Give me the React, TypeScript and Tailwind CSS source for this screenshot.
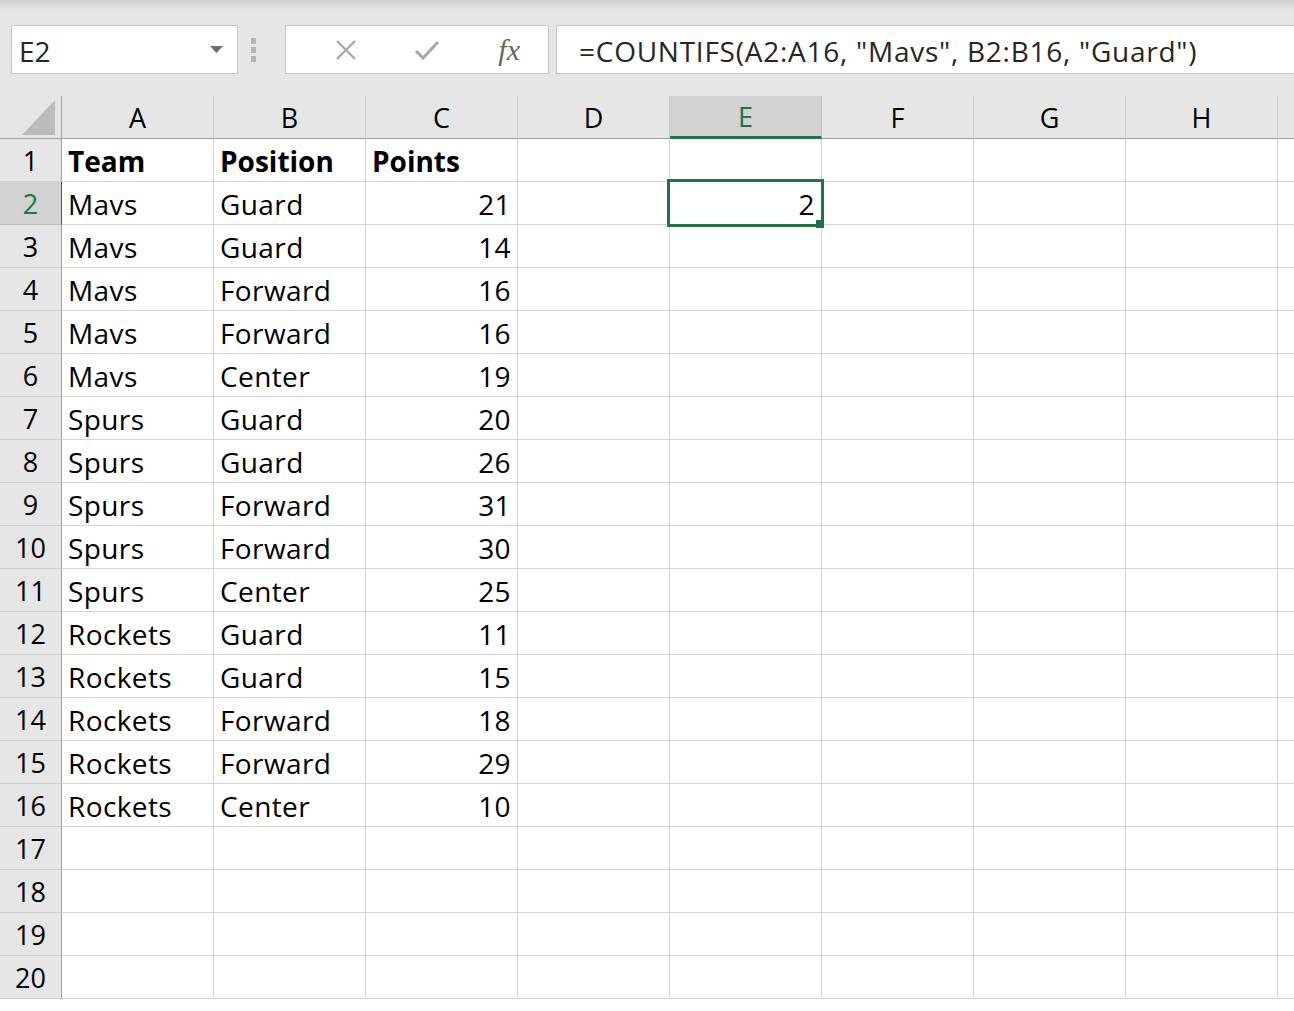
import React from "react";

type Cell = string | number | null;

const COLS = ["A", "B", "C", "D", "E", "F", "G", "H"];

const DATA: [string, string, number][] = [
  ["Mavs", "Guard", 21],
  ["Mavs", "Guard", 14],
  ["Mavs", "Forward", 16],
  ["Mavs", "Forward", 16],
  ["Mavs", "Center", 19],
  ["Spurs", "Guard", 20],
  ["Spurs", "Guard", 26],
  ["Spurs", "Forward", 31],
  ["Spurs", "Forward", 30],
  ["Spurs", "Center", 25],
  ["Rockets", "Guard", 11],
  ["Rockets", "Guard", 15],
  ["Rockets", "Forward", 18],
  ["Rockets", "Forward", 29],
  ["Rockets", "Center", 10],
];

// build the 20 visible rows, E2 holds the formula result
const rows: Cell[][] = Array.from({ length: 20 }, (_, i) => {
  const r: Cell[] = Array(8).fill(null);
  if (i === 0) {
    r[0] = "Team";
    r[1] = "Position";
    r[2] = "Points";
  } else if (i <= DATA.length) {
    const [team, pos, pts] = DATA[i - 1];
    r[0] = team;
    r[1] = pos;
    r[2] = pts;
  }
  if (i === 1) r[4] = 2;
  return r;
});

function Toolbar() {
  return (
    <div className="relative h-[96px] bg-[#e6e6e6]">
      <div className="absolute inset-x-0 top-0 h-[10px] bg-gradient-to-b from-[#cfcfcf] to-[#e6e6e6]" />
      <div className="relative flex items-start pt-[25px] pl-[11px]">
        {/* name box */}
        <div className="flex h-[49px] w-[227px] items-center justify-between border border-[#c6c6c6] bg-white pl-[7px] pr-[14px]">
          <span className="pt-[2px] text-[28px] text-[#262626]">E2</span>
          <svg width="13" height="8" viewBox="0 0 13 8">
            <path d="M0 0h13L6.5 7z" fill="#6e6e6e" />
          </svg>
        </div>
        <div className="flex h-[49px] w-[47px] flex-col items-start justify-center gap-[3px] pl-[13px]">
          <span className="h-[6px] w-[5px] bg-[#b4b4b4]" />
          <span className="h-[6px] w-[5px] bg-[#b4b4b4]" />
          <span className="h-[6px] w-[5px] bg-[#b4b4b4]" />
        </div>
        {/* cancel / enter / function buttons */}
        <div className="flex h-[49px] w-[264px] items-center border border-[#c6c6c6] bg-white">
          <div className="flex w-[82px] justify-center pl-[38px]">
            <svg width="22" height="22" viewBox="0 0 22 22">
              <path d="M2 2l18 18M20 2L2 20" stroke="#a8a8a8" strokeWidth="2.4" />
            </svg>
          </div>
          <div className="flex w-[82px] justify-center pl-[36px]">
            <svg width="26" height="22" viewBox="0 0 26 22">
              <path d="M2 12l7 7L24 3" stroke="#a8a8a8" strokeWidth="3" fill="none" />
            </svg>
          </div>
          <div className="flex flex-1 justify-end pr-[28px]">
            <span className="font-['Liberation_Serif',serif] text-[30px] italic leading-none text-[#666]">
              fx
            </span>
          </div>
        </div>
        {/* formula input */}
        <div className="ml-[7px] flex h-[49px] flex-1 items-center border border-r-0 border-[#c6c6c6] bg-white pl-[22px]">
          <span className="pt-[2px] text-[28px] tracking-[0.75px] text-[#262626]">
            =COUNTIFS(A2:A16, "Mavs", B2:B16, "Guard")
          </span>
        </div>
      </div>
    </div>
  );
}

function Sheet() {
  return (
    <div className="grid grid-cols-[62px_repeat(8,152px)_1fr] auto-rows-[43px]">
      {/* corner */}
      <div className="relative border-r border-b border-[#9f9f9f] bg-[#e6e6e6]">
        <svg className="absolute left-[22px] top-[4px]" width="33" height="35" viewBox="0 0 33 35">
          <path d="M33 0v35H0z" fill="#bcbcbc" />
        </svg>
      </div>
      {COLS.map((c) => (
        <div
          key={c}
          className={`flex items-center justify-center border-b pt-[3px] text-[27px] ${
            c === "E"
              ? "border-b-[3px] border-b-[#217346] border-r border-r-[#bdbdbd] bg-[#d2d2d2] text-[#217346]"
              : "border-r border-r-[#cdcdcd] border-b-[#9f9f9f] bg-[#e6e6e6] text-black"
          }`}
        >
          {c}
        </div>
      ))}
      <div className="border-b border-[#9f9f9f] bg-[#e6e6e6]" />

      {rows.map((r, i) => (
        <React.Fragment key={i}>
          <div
            className={`flex items-center justify-center border-b border-r pt-[3px] text-[27px] ${
              i === 1
                ? "border-b-[#bdbdbd] border-r-[#217346] bg-[#d2d2d2] text-[#217346]"
                : "border-b-[#cfcfcf] border-r-[#9f9f9f] bg-[#e6e6e6] text-black"
            }`}
          >
            {i + 1}
          </div>
          {r.map((v, j) => {
            const selected = i === 1 && j === 4;
            return (
              <div
                key={j}
                className={`relative flex items-center border-r border-b border-[#d4d4d4] bg-white px-[6px] pt-[1px] text-[28px] text-black ${
                  typeof v === "number" ? "justify-end" : "justify-start"
                } ${i === 0 ? "font-bold" : "tracking-[0.4px]"}`}
              >
                {selected && (
                  <>
                    <div className="absolute -left-[3px] -top-[3px] z-10 h-[48px] w-[157px] border-[3px] border-[#217346]" />
                    <div className="absolute -bottom-[4px] -right-[3px] z-20 h-[8px] w-[8px] bg-[#217346]" />
                  </>
                )}
                <span className="relative">{v}</span>
              </div>
            );
          })}
          <div className="border-b border-[#d4d4d4] bg-white" />
        </React.Fragment>
      ))}
    </div>
  );
}

export default function App() {
  return (
    <div className="h-[1011px] w-[1294px] overflow-hidden bg-white font-['Open_Sans',sans-serif]">
      <Toolbar />
      <Sheet />
    </div>
  );
}
